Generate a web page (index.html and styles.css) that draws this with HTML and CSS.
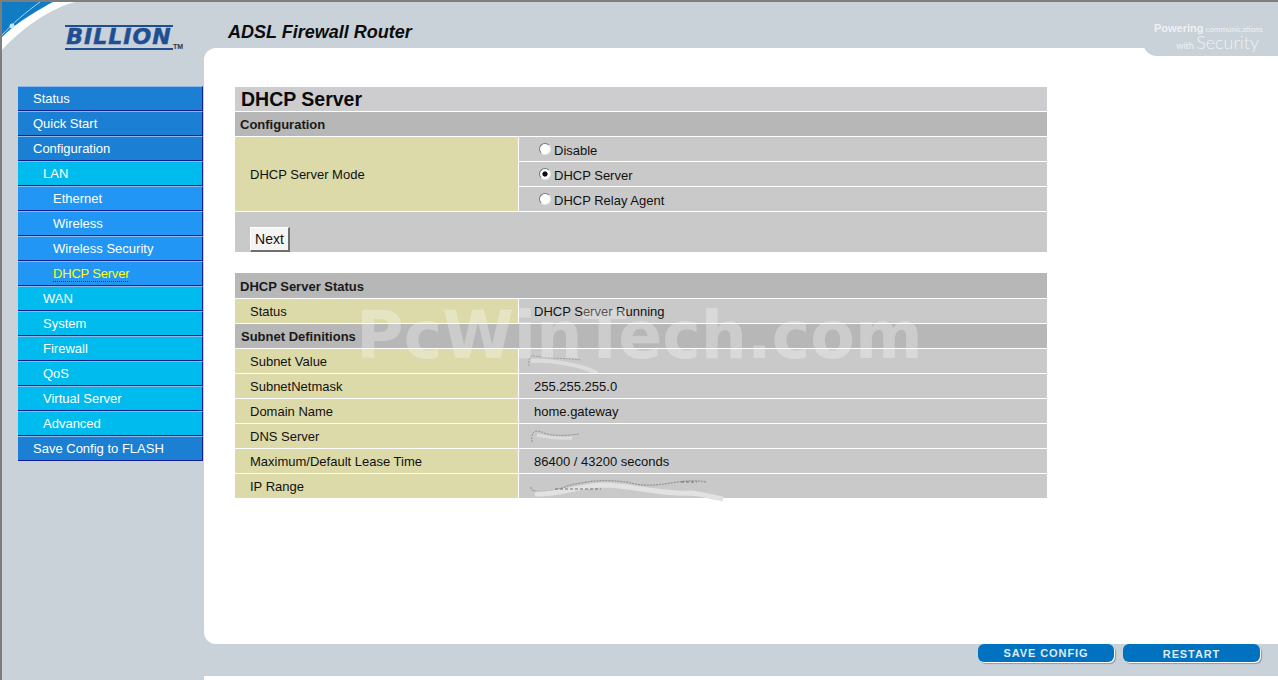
FILE: index.html
```html
<!DOCTYPE html>
<html lang="en">
<head>
<meta charset="utf-8">
<title>ADSL Firewall Router</title>
<link rel="stylesheet" href="styles.css">
</head>
<body>
<div class="page">
  <header class="top">
    <svg class="swoosh" width="76" height="52" viewBox="0 0 76 52">
      <path d="M0 0H73C50 6 22 24 0 48Z" fill="#fff"/>
      <path d="M0 0H51C38 7 16 19 0 35Z" fill="#0f7cc4"/>
      <path d="M0 33C10 22 24 10 38 0" fill="none" stroke="#a8d4ee" stroke-width="1"/>
      <circle cx="10" cy="24" r="2.5" fill="#c8e8f7"/>
    </svg>
    <div class="logo"><span class="logo-word">BILLION</span><span class="tm">TM</span></div>
    <h1 class="product">ADSL Firewall Router</h1>
    <div class="slogan">
      <div class="slogan-a"><b>Powering</b> communications</div>
      <div class="slogan-b">with <span>Security</span></div>
    </div>
  </header>
  <div class="middle">
    <nav class="side">
      <a class="nav l0">Status</a>
      <a class="nav l0">Quick Start</a>
      <a class="nav l0">Configuration</a>
      <a class="nav l1">LAN</a>
      <a class="nav l2">Ethernet</a>
      <a class="nav l2">Wireless</a>
      <a class="nav l2">Wireless Security</a>
      <a class="nav l2"><span class="current">DHCP Server</span></a>
      <a class="nav l1">WAN</a>
      <a class="nav l1">System</a>
      <a class="nav l1">Firewall</a>
      <a class="nav l1">QoS</a>
      <a class="nav l1">Virtual Server</a>
      <a class="nav l1">Advanced</a>
      <a class="nav l0">Save Config to FLASH</a>
    </nav>
    <main class="panel">
      <section class="block">
        <div class="row title">DHCP Server</div>
        <div class="row head">Configuration</div>
        <div class="mode">
          <div class="label mode-label">DHCP Server Mode</div>
          <div class="options">
            <label class="value opt"><input class="radio" type="radio" name="m">Disable</label>
            <label class="value opt"><input class="radio" type="radio" name="m" checked>DHCP Server</label>
            <label class="value opt"><input class="radio" type="radio" name="m">DHCP Relay Agent</label>
          </div>
        </div>
        <div class="actions"><button class="next" type="button">Next</button></div>
      </section>
      <section class="block second">
        <div class="row head head-tall">DHCP Server Status</div>
        <div class="pair"><div class="label">Status</div><div class="value">DHCP Server Running</div></div>
        <div class="row head head-b">Subnet Definitions</div>
        <div class="pair"><div class="label">Subnet Value</div><div class="value">
          <svg class="smudge" width="90" height="24" viewBox="0 0 90 24"><path d="M10 17C9 10 11 6 16 7C30 10 50 9 62 11" fill="none" stroke="#a0a0a0" stroke-width="1" stroke-dasharray="2 1"/><path d="M12 12C30 11 60 15 78 24" fill="none" stroke="#dcdcdc" stroke-width="4"/></svg>
        </div></div>
        <div class="pair"><div class="label">SubnetNetmask</div><div class="value">255.255.255.0</div></div>
        <div class="pair"><div class="label">Domain Name</div><div class="value">home.gateway</div></div>
        <div class="pair"><div class="label">DNS Server</div><div class="value">
          <svg class="smudge" width="90" height="24" viewBox="0 0 90 24"><path d="M13 18C12 10 14 7 19 7C25 8 27 11 35 11C43 12 51 11 60 10" fill="none" stroke="#909090" stroke-width="1" stroke-dasharray="2 1"/><path d="M18 11C23 12 33 15 53 14" fill="none" stroke="#dcdcdc" stroke-width="3"/></svg>
        </div></div>
        <div class="pair"><div class="label">Maximum/Default Lease Time</div><div class="value">86400 / 43200 seconds</div></div>
        <div class="pair last"><div class="label">IP Range</div><div class="value">
          <svg class="smudge wide" width="200" height="24" viewBox="0 0 200 24"><path d="M0 12C-1 17 8 17 22 16C30 14 36 10 50 8C70 4 84 6 96 7C110 11 122 11 140 8C152 6 164 5 176 7" fill="none" stroke="#969696" stroke-width="1.3" stroke-dasharray="2 1"/><path d="M4 19C30 20 44 11 72 10C100 10 130 20 160 18C172 19 180 22 192 24" fill="none" stroke="#e2e2e2" stroke-width="5"/><path d="M24 14H70M150 7H166" fill="none" stroke="#707070" stroke-width="1.2" stroke-dasharray="3 2"/></svg>
        </div></div>
      </section>
      <div class="watermark">PcWinTech.com</div>
    </main>
  </div>
  <footer class="bottom">
    <a class="pill save">SAVE CONFIG</a>
    <a class="pill restart">RESTART</a>
  </footer>
</div>
</body>
</html>
```
FILE: styles.css
```css
* { box-sizing: border-box; }
html, body { margin: 0; height: 100%; overflow: hidden; background: #fff; }
body { font-family: "Liberation Sans", Arial, sans-serif; font-size: 13px; color: #111; }
.page { width: 1278px; height: 680px; display: flex; flex-direction: column; background: #c9d1d9; border-top: 2px solid #7d7d7d; border-left: 2px solid #7d7d7d; position: relative; overflow: hidden; }
.top { height: 46px; position: relative; flex: none; }
.swoosh { position: absolute; left: 0; top: 0; }
.logo { position: absolute; left: 63px; top: 23px; display: flex; align-items: flex-end; }
.logo-word { display: block; width: 108px; height: 25px; line-height: 20px; border-top: 2px solid #1f4e93; border-bottom: 2px solid #1f4e93; color: #1f4e93; font-family: "DejaVu Sans", sans-serif; font-weight: 700; font-style: italic; font-size: 22px; letter-spacing: 1px; text-align: center; -webkit-text-stroke: .5px #1f4e93; white-space: nowrap; }
.tm { font-size: 7px; font-weight: 700; color: #333; line-height: 8px; margin-bottom: -1px; }
.product { position: absolute; left: 226px; top: 19px; margin: 0; font-size: 18px; font-weight: 700; font-style: italic; line-height: 22px; color: #0c0c0c; }
.slogan { position: absolute; right: 0; top: 0; width: 135px; height: 54px; background: #c9d1d9; border-bottom-left-radius: 14px; z-index: 2; color: #eef1f4; padding: 20px 15px 0 0; text-align: right; font-family: Lato, "Liberation Sans", sans-serif; }
.slogan-a { font-size: 8px; line-height: 12px; white-space: nowrap; }
.slogan-a b { font-size: 11px; font-family: "Liberation Sans", sans-serif; }
.slogan-b { font-size: 9px; line-height: 16px; margin-right: 4px; margin-top: -1px; white-space: nowrap; }
.slogan-b span { font-size: 18px; font-weight: 300; }
.middle { height: 596px; flex: none; display: flex; }
.side { width: 202px; flex: none; padding: 38px 1px 0 16px; display: flex; flex-direction: column; }
.nav { display: block; height: 25px; line-height: 23px; color: #fff; border-top: 1px solid #8fb7ea; border-bottom: 1px solid #141e8c; border-right: 1px solid #141e8c; white-space: nowrap; }
.l0 { background: #1b7fd4; padding-left: 15px; }
.l1 { background: #00bbee; padding-left: 25px; }
.l2 { background: #2196f5; padding-left: 35px; }
.current { color: #ffff00; border-bottom: 1px dotted #2020e0; border-top: 1px dotted #e0662a; border-right: 1px dotted #e0662a; letter-spacing: -.2px; }
.panel { flex: 1; background: #fff; border-radius: 12px 0 0 12px; position: relative; padding: 39px 0 0 31px; }
.block { width: 812px; background: #c9c9c9; }
.second { margin-top: 21px; }
.row { border-bottom: 1px solid #fff; white-space: nowrap; }
.title { height: 25px; line-height: 24px; padding-left: 6px; font-size: 19.5px; font-weight: 700; background: #cdcdcf; color: #0a0a0a; }
.head { height: 25px; line-height: 26px; padding-left: 5px; font-weight: 700; background: #b7b7b7; color: #1a1a1a; }
.head-tall { height: 26px; line-height: 28px; }
.head-b { padding-left: 6px; }
.mode { display: flex; height: 75px; border-bottom: 1px solid #fff; }
.label { width: 284px; flex: none; background: #dcdaa9; padding-left: 15px; border-right: 1px solid #fff; }
.mode-label { line-height: 76px; }
.options { flex: 1; display: flex; flex-direction: column; }
.value { flex: 1; padding-left: 15px; position: relative; }
.opt { height: 25px; flex: none; padding: 2px 0 0 20px; display: flex; align-items: center; border-bottom: 1px solid #fff; }
.opt:last-child { height: 24px; border-bottom: 0; }
.radio { appearance: none; -webkit-appearance: none; width: 12px; height: 12px; margin: -3px 3px 0 0; border-radius: 50%; background: #fff; border: 1px solid; border-color: #7a7a7a #e8e8e8 #e8e8e8 #7a7a7a; flex: none; position: relative; }
.radio:checked { background: radial-gradient(circle at 50% 50%, #111 0 2.2px, #fff 3px); }
.actions { height: 40px; padding: 15px 0 0 15px; }
.next { display: block; width: 40px; height: 25px; padding: 0; font: 14px "Liberation Sans", Arial, sans-serif; color: #111; background: #f4f4f2; border: 1px solid; border-color: #fff #6e6e6e #6e6e6e #fff; border-right-width: 2px; border-bottom-width: 2px; }
.pair { display: flex; height: 25px; line-height: 26px; border-bottom: 1px solid #fff; }
.last { height: 24px; border-bottom: 0; }
.smudge { position: absolute; left: 0; top: 0; filter: blur(.4px); }
.smudge.wide { left: 12px; top: 1px; overflow: visible; }
.watermark { position: absolute; left: 152px; top: 252px; font-family: "DejaVu Sans", sans-serif; font-size: 65px; font-weight: 700; line-height: 72px; color: rgba(255,255,255,.3); white-space: nowrap; pointer-events: none; }
.bottom { height: 32px; flex: none; position: relative; display: flex; justify-content: flex-end; gap: 9px; padding: 0 18px 0 0; }
.bottom::after { content: ""; position: absolute; left: 202px; right: 0; top: 32px; height: 4px; background: #fff; }
.pill { display: block; width: 137px; height: 18px; background: #0072bf; color: #dfeaf3; border-radius: 6px; box-shadow: 1px 1px 0 #fff, 2px 2px 1px #8f9aa3; font-size: 11px; font-weight: 700; letter-spacing: .9px; text-align: center; line-height: 18px; }
.save { width: 136px; }
.restart { line-height: 20px; }
```
